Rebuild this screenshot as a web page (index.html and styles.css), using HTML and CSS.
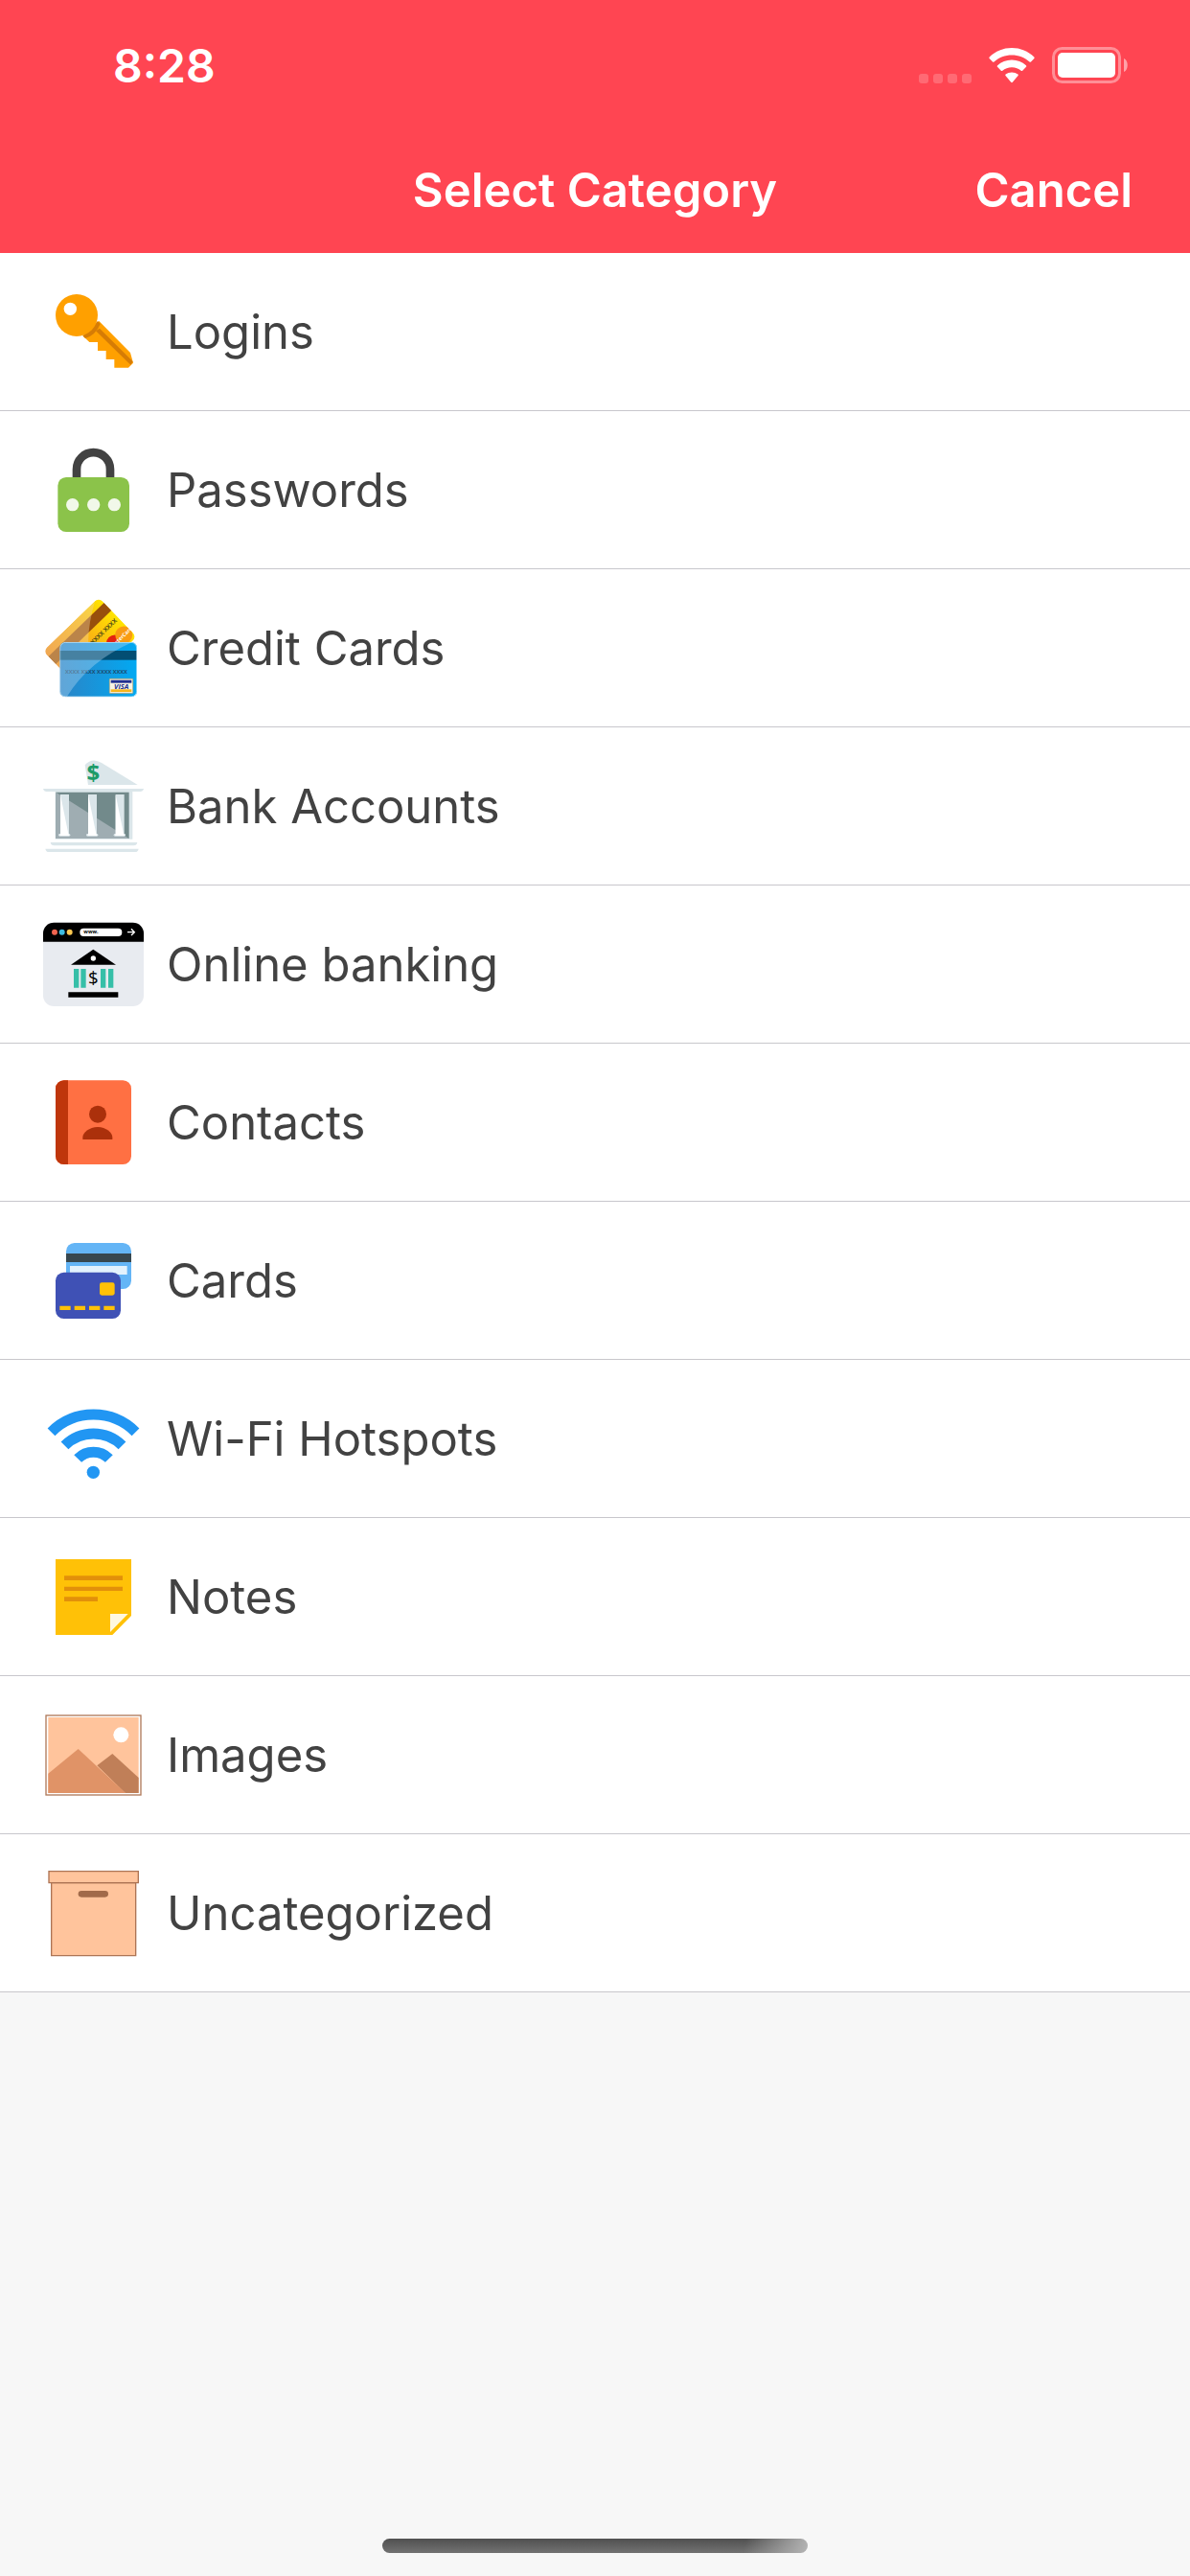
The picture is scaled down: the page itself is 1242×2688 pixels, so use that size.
FILE: index.html
```html
<!DOCTYPE html>
<html lang="en">
<head>
    <meta charset="UTF-8">
    <meta name="viewport" content="width=device-width, initial-scale=1.0">
    <title>Select Category</title>
    <link rel="stylesheet" href="styles.css">
</head>
<body>
    <header class="header">
        <div class="status-bar">
            <span class="time">8:28</span>
            <div class="status-icons">
                <svg class="signal" viewBox="0 0 55 10" fill="#fff" fill-opacity="0.2">
                    <rect width="10" height="10" rx="3"/>
                    <rect x="15" width="10" height="10" rx="3"/>
                    <rect x="30" width="10" height="10" rx="3"/>
                    <rect x="45" width="10" height="10" rx="3"/>
                </svg>
                <svg class="wifi" viewBox="0 0 48 37" fill="#fff">
                    <path d="M24 0C33 0 41 3.400 47.300 9.400c.5.5.5 1 .1 1.500L44 14.500c-.4.4-1 .4-1.500 0C37.500 10 31 7.500 24 7.500S10.500 10 5.500 14.500c-.5.4-1.100.4-1.500 0L.6 10.900c-.4-.5-.4-1 .1-1.500C7 3.400 15 0 24 0z"/>
                    <path d="M24 12.500c5.700 0 10.900 2.200 14.900 5.800.5.5.5 1.100.1 1.500l-3.800 4c-.4.4-1 .4-1.500 0A14.500 14.500 0 0 0 24 20.300c-3.700 0-7.100 1.300-9.700 3.500-.5.4-1.100.4-1.500 0l-3.800-4c-.4-.4-.4-1 .1-1.500 4-3.600 9.200-5.800 14.900-5.800z"/>
                    <path d="M24 25.500c2.400 0 4.600.8 6.400 2.100.5.4.5 1 .1 1.400l-5.700 6.800c-.5.5-1.100.5-1.600 0L17.500 29c-.4-.4-.4-1 .1-1.400 1.800-1.300 4-2.100 6.400-2.100z"/>
                </svg>
                <svg class="battery" viewBox="0 0 80 38">
                    <rect x="1.500" y="1.500" width="69" height="35" rx="9" fill="none" stroke="#fff" stroke-opacity="0.4" stroke-width="3"/>
                    <rect x="6" y="6" width="60" height="26" rx="5" fill="#fff"/>
                    <path d="M75 12c5 2 5 12 0 14z" fill="#fff" fill-opacity="0.5"/>
                </svg>
            </div>
        </div>
        <div class="nav-bar">
            <h1>Select Category</h1>
            <button type="button" class="cancel">Cancel</button>
        </div>
    </header>

    <main class="content">
        <ul class="categories">
            <li>
                <button type="button" class="category">
                    <svg class="icon" viewBox="0 0 315 315">
                        <path fill="#ffa000" d="M125 170l20 19h26v27h26v27h26v26h44l15-15-9-32-98-99z"/>
                        <path fill="#d67c05" d="M177 146l104 104-7 10-109-106z"/>
                        <path fill="#d67c05" d="M124 169l8 8q32-9 47-45l-8-9z"/>
                        <circle cx="105" cy="105" r="66" fill="#ffa000"/>
                        <circle cx="85" cy="85" r="20" fill="#fff"/>
                    </svg>
                    <span>Logins</span>
                </button>
            </li>
            <li>
                <button type="button" class="category">
                    <svg class="icon" viewBox="0 0 315 315">
                        <path d="M105 122V92a52.500 52.500 0 0 1 105 0v30" fill="none" stroke="#424242" stroke-width="26"/>
                        <rect x="46" y="117" width="224" height="171" rx="26" fill="#8bc34a"/>
                        <g fill="#f1f8e9">
                            <circle cx="92" cy="203" r="20"/>
                            <circle cx="158" cy="203" r="20"/>
                            <circle cx="223" cy="203" r="20"/>
                        </g>
                    </svg>
                    <span>Passwords</span>
                </button>
            </li>
            <li>
                <button type="button" class="category">
                    <svg class="icon" viewBox="0 0 315 315">
                        <defs>
                            <linearGradient id="gold">
                                <stop offset="0" stop-color="#f08a1c"/>
                                <stop offset="0.600" stop-color="#fbb910"/>
                                <stop offset="1" stop-color="#ffe400"/>
                            </linearGradient>
                            <linearGradient id="blue">
                                <stop offset="0" stop-color="#2b84c6"/>
                                <stop offset="1" stop-color="#02a9f2"/>
                            </linearGradient>
                            <clipPath id="card"><rect width="242" height="172" rx="18"/></clipPath>
                        </defs>
                        <g transform="translate(0 166) rotate(-44)">
                            <g clip-path="url(#card)">
                                <rect width="242" height="172" fill="url(#gold)"/>
                                <rect y="24" width="242" height="33" fill="#984f0c"/>
                                <circle cx="178" cy="139" r="27" fill="#e3230f"/>
                                <circle cx="217" cy="139" r="27" fill="#f99b12"/>
                                <text class="card-brand" x="156" y="145" fill="#fff">MasterCard</text>
                                <text class="card-digits" x="126" y="94" fill="#4c4a18">XXXX XXXX</text>
                                <path d="M0 0h226q-70 40-106 80-40 46-56 92H0z" fill="#f1d5a5" fill-opacity="0.400"/>
                            </g>
                        </g>
                        <g transform="translate(52 138)">
                            <g clip-path="url(#card)">
                                <rect width="242" height="172" fill="url(#blue)"/>
                                <rect y="27" width="242" height="29" fill="#034e73"/>
                                <text class="card-digits-small" x="17" y="98" fill="#1c4c70">XXXX XXXX XXXX XXXX</text>
                                <path d="M0 0h228Q90 60 22 172H0z" fill="#c5e3f6" fill-opacity="0.350"/>
                                <rect x="1" y="1" width="240" height="170" rx="17" fill="none" stroke="#d9effa" stroke-opacity="0.700" stroke-width="3"/>
                            </g>
                            <rect x="156" y="115" width="73" height="45" rx="2" fill="#f7f4e4" stroke="#b9a46a" stroke-width="2"/>
                            <rect x="160" y="119" width="65" height="9" fill="#202f91"/>
                            <rect x="160" y="148" width="65" height="8" fill="#f7b51b"/>
                            <text class="visa" x="193" y="146" fill="#202f91">VISA</text>
                        </g>
                    </svg>
                    <span>Credit Cards</span>
                </button>
            </li>
            <li>
                <button type="button" class="category">
                    <svg class="icon" viewBox="0 0 315 315">
                        <g fill="#dbe6ea">
                            <path d="M131 28q22-25 52-7l113 69H141z"/>
                            <path d="M0 102h315q-2 9-11 9H11q-9 0-11-9z"/>
                            <path d="M38 111h242v149H38z"/>
                            <path d="M23 270h272q-2 10-11 10H34q-9 0-11-10z"/>
                            <path d="M7 290h292q-2 10-11 10H18q-9 0-11-10z"/>
                        </g>
                        <path d="M40 113h229v145H40z" fill="#728a8b"/>
                        <path d="M40 113l229 145H40z" fill="#9fadb2"/>
                        <g fill="#dbe6ea">
                            <path d="M54 120h27v123H54zM141 120h27v123h-27zM227 120h27v123h-27z"/>
                            <rect x="48" y="243" width="37" height="8" rx="4"/>
                            <rect x="135" y="243" width="37" height="8" rx="4"/>
                            <rect x="221" y="243" width="37" height="8" rx="4"/>
                        </g>
                        <path d="M54 120l25 123 4 6H52l2-6zM141 120l25 123 4 6h-31l2-6zM227 120l25 123 4 6h-31l2-6z" fill="#fff"/>
                        <text class="dollar-bold" x="157" y="79" fill="#1d9b69">$</text>
                    </svg>
                    <span>Bank Accounts</span>
                </button>
            </li>
            <li>
                <button type="button" class="category">
                    <svg class="icon" viewBox="0 0 315 315">
                        <rect y="26" width="315" height="262" rx="34" fill="#e8ebf0"/>
                        <path d="M0 86V60a34 34 0 0 1 34-34h247a34 34 0 0 1 34 34v26z"/>
                        <circle cx="36" cy="56" r="9" fill="#f0644f"/>
                        <circle cx="59" cy="56" r="9" fill="#3dbbe0"/>
                        <circle cx="83" cy="56" r="9" fill="#fbc751"/>
                        <rect x="115" y="44" width="132" height="25" rx="12" fill="#fff"/>
                        <text class="www" x="127" y="61">www.</text>
                        <path d="M264 56h21M276 46l10 10-10 10" fill="none" stroke="#fff" stroke-width="4"/>
                        <path d="M157 110l71 48H87z"/>
                        <circle cx="157" cy="138" r="8" fill="#fff"/>
                        <path d="M96 171h16v59H96zM118 171h16v59h-16zM180 171h16v59h-16zM204 171h16v59h-16z" fill="#36bfa8"/>
                        <text class="dollar" x="157" y="218">$</text>
                        <path d="M79 244h156v16H79z"/>
                    </svg>
                    <span>Online banking</span>
                </button>
            </li>
            <li>
                <button type="button" class="category">
                    <svg class="icon" viewBox="0 0 315 315">
                        <rect x="39" y="25" width="237" height="263" rx="26" fill="#ff7043"/>
                        <path d="M78 25v263H65a26 26 0 0 1-26-26V51a26 26 0 0 1 26-26z" fill="#bf360c"/>
                        <g fill="#ab300b">
                            <circle cx="171" cy="131" r="27"/>
                            <path d="M124 210v-7c0-14 21-32 47-32s46 18 46 32v7z"/>
                        </g>
                    </svg>
                    <span>Contacts</span>
                </button>
            </li>
            <li>
                <button type="button" class="category">
                    <svg class="icon" viewBox="0 0 315 315">
                        <rect x="72" y="39" width="204" height="144" rx="26" fill="#64b5f6"/>
                        <path d="M72 72h204v27H72z" fill="#37474f"/>
                        <path d="M84 111h179v27H84z" fill="#e3f2fd"/>
                        <rect x="39" y="131" width="204" height="145" rx="26" fill="#3f51b5"/>
                        <rect x="177" y="163" width="47" height="40" rx="7" fill="#ffc107"/>
                        <path d="M52 236h34v13H52zM98 236h34v13H98zM144 236h34v13h-34zM190 236h34v13h-34z" fill="#ffc107"/>
                    </svg>
                    <span>Cards</span>
                </button>
            </li>
            <li>
                <button type="button" class="category">
                    <svg class="icon" viewBox="0 0 315 315">
                        <g fill="none" stroke="#2196f3" stroke-width="33">
                            <path d="M25.500 136a186.500 186.500 0 0 1 264 0"/>
                            <path d="M67.500 178a127.500 127.500 0 0 1 180 0"/>
                            <path d="M108.500 219a69 69 0 0 1 98 0"/>
                        </g>
                        <circle cx="157" cy="262" r="20" fill="#2196f3"/>
                    </svg>
                    <span>Wi-Fi Hotspots</span>
                </button>
            </li>
            <li>
                <button type="button" class="category">
                    <svg class="icon" viewBox="0 0 315 315">
                        <path d="M39 39h237v177l-59 60H39z" fill="#ffc107"/>
                        <path d="M66 91h183v14H66zM66 125h183v13H66zM66 157h105v14H66z" fill="#e2900a"/>
                        <path d="M210 210h56l-56 57z" fill="#fff8e1"/>
                    </svg>
                    <span>Notes</span>
                </button>
            </li>
            <li>
                <button type="button" class="category">
                    <svg class="icon" viewBox="0 0 315 315">
                        <rect x="9" y="33" width="297" height="249" fill="#fff" stroke="#b07a5a" stroke-width="4"/>
                        <path d="M16 39h283v237H16z" fill="#ffc49c"/>
                        <circle cx="244" cy="94" r="24" fill="#fff"/>
                        <path d="M169 190l48-37 82 75v48h-42z" fill="#c07f58"/>
                        <path d="M16 215l94-77 148 138H16z" fill="#e09367"/>
                    </svg>
                    <span>Images</span>
                </button>
            </li>
            <li>
                <button type="button" class="category">
                    <svg class="icon" viewBox="0 0 315 315">
                        <g fill="#ffc49c" stroke="#ad7454" stroke-width="4">
                            <path d="M26 62h264v228H26z"/>
                            <path d="M18 26h280v36H18z"/>
                        </g>
                        <rect x="110" y="87" width="94" height="20" rx="10" fill="#a16a4a"/>
                    </svg>
                    <span>Uncategorized</span>
                </button>
            </li>
        </ul>
    </main>

    <footer class="footer">
        <div class="home-indicator"></div>
    </footer>
</body>
</html>
```
FILE: styles.css
```css
body {
    font-family: Inter, "Liberation Sans", sans-serif;
    background-color: #f7f7f7;
    color: #424242;
    margin: 0;
    min-height: 100vh;
    display: flex;
    flex-direction: column;
}

button {
    font: inherit;
    color: inherit;
    background: none;
    border: none;
    padding: 0;
    cursor: pointer;
}

.header {
    background-color: #ff4552;
    color: #fff;
    font-weight: 600;
}

.status-bar {
    display: flex;
    justify-content: space-between;
    align-items: center;
    height: 128px;
    padding: 4px 64px 0 118px;
}

.time {
    font-size: 48px;
}

.status-icons {
    display: flex;
    align-items: flex-end;
    gap: 18px;
}

.signal {
    width: 55px;
    height: 10px;
}

.wifi {
    width: 48px;
    height: 37px;
}

.battery {
    width: 80px;
    height: 38px;
}

.nav-bar {
    display: grid;
    grid-template-columns: 1fr auto 1fr;
    align-items: center;
    height: 132px;
    padding: 0 60px;
    font-size: 49px;
}

.nav-bar h1 {
    grid-column: 2;
    margin: 0;
    font-size: 49px;
    font-weight: 600;
}

.cancel {
    justify-self: end;
}

.content {
    flex: 1;
}

.categories {
    list-style: none;
    margin: 0;
    padding: 0;
    background-color: #fff;
}

.category {
    display: flex;
    align-items: center;
    gap: 24px;
    width: 100%;
    padding: 30px 45px 29px;
    border-bottom: 1px solid #c8c7cc;
    font-size: 49px;
    line-height: 60px;
    text-align: left;
}

.icon {
    flex: none;
    width: 105px;
    height: 105px;
}

.icon text {
    font-family: "Open Sans", sans-serif;
    font-weight: bold;
}

.icon .card-brand {
    font-size: 16px;
}

.icon .card-digits {
    font-size: 19px;
}

.icon .card-digits-small {
    font-size: 17px;
}

.icon .visa {
    font-size: 22px;
    font-style: italic;
    text-anchor: middle;
}

.icon .dollar-bold {
    font-size: 72px;
    text-anchor: middle;
}

.icon .www {
    font-size: 16px;
}

.icon .dollar {
    font-size: 56px;
    font-weight: normal;
    text-anchor: middle;
}

.footer {
    display: flex;
    justify-content: center;
    padding-bottom: 24px;
}

.home-indicator {
    width: 444px;
    height: 15px;
    border-radius: 8px;
    background: linear-gradient(100deg, transparent 85%, #b4b4b4), linear-gradient(#505050, #727272);
}
```
